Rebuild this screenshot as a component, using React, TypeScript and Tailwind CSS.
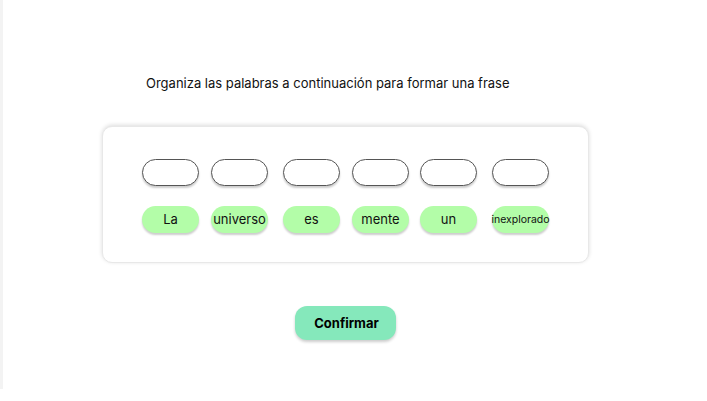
import React from "react";

const words = ["La", "universo", "es", "mente", "un", "inexplorado"];
const gaps = ["ml-0", "ml-[12px]", "ml-[15px]", "ml-[12px]", "ml-[11px]", "ml-[15px]"];

export default function App() {
  return (
    <div
      className="relative w-[707px] h-[401px] bg-white overflow-hidden"
      style={{ fontFamily: "Inter, 'Noto Sans', sans-serif" }}
    >
      <div className="absolute left-0 top-0 w-[3px] h-[389px] bg-[#f3f3f3]" />
      <div className="flex flex-col pt-[74px]">
        <p className="ml-[146px] text-[13px] leading-[18px] text-[#111]">
          Organiza las palabras a continuación para formar una frase
        </p>
        <div className="ml-[102px] mt-[34px] w-[487px] h-[137px] rounded-[10px] border border-[#e8e8e8] bg-white shadow-[0_-1px_4px_rgba(0,0,0,0.14)] px-[39px] pt-[32px]">
          <div className="flex">
            {words.map((_, i) => (
              <div
                key={i}
                className={`${gaps[i]} w-[57px] h-[27px] rounded-full border border-[#555] bg-white shadow-[0_2px_2px_rgba(0,0,0,0.2)]`}
              />
            ))}
          </div>
          <div className="flex mt-[20px]">
            {words.map((w, i) => (
              <div
                key={i}
                className={`${gaps[i]} w-[57px] h-[27px] rounded-full bg-[#b3fda8] shadow-[0_2px_2px_rgba(0,0,0,0.2)] flex items-center justify-center text-[#111] whitespace-nowrap ${
                  w === "inexplorado" ? "text-[10.5px]" : "text-[13px]"
                }`}
              >
                {w}
              </div>
            ))}
          </div>
        </div>
        <div className="flex ml-[295px] mt-[43px]">
          <button className="w-[101px] h-[34px] rounded-[12px] bg-[#85e8bb] text-[13px] font-bold text-black shadow-[0_2px_3px_rgba(0,0,0,0.2)] pl-[2px] pt-[2px]">
            Confirmar
          </button>
        </div>
      </div>
    </div>
  );
}
